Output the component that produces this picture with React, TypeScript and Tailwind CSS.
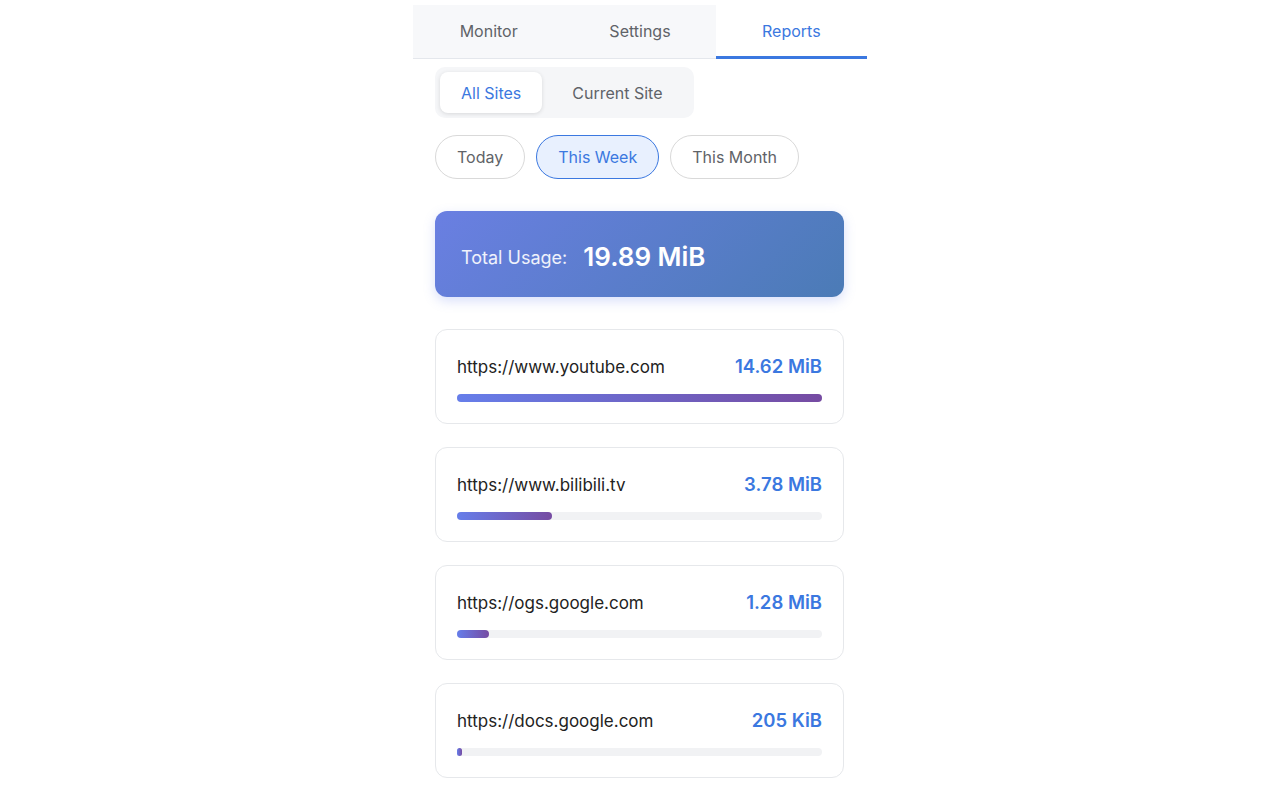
import { useState } from 'react'

const sites = [
  { url: 'https://www.youtube.com', size: '14.62 MiB', pct: 100 },
  { url: 'https://www.bilibili.tv', size: '3.78 MiB', pct: 25.9 },
  { url: 'https://ogs.google.com', size: '1.28 MiB', pct: 8.8 },
  { url: 'https://docs.google.com', size: '205 KiB', pct: 1.4 },
]

const tabs = ['Monitor', 'Settings', 'Reports']
const ranges = ['Today', 'This Week', 'This Month']

export default function App() {
  const [tab, setTab] = useState('Reports')
  const [scope, setScope] = useState('all')
  const [range, setRange] = useState('This Week')

  return (
    <div className="min-h-screen bg-white font-['Inter','Noto_Sans',sans-serif] text-[16px]">
      <div className="mx-auto w-[454px] pt-[5px]">
        <div className="flex border-b border-[#e4e7ec] bg-[#f7f8fa]">
          {tabs.map((t) => (
            <button
              key={t}
              onClick={() => setTab(t)}
              className={`-mb-px h-[54px] flex-1 border-b-[3px] text-[16px] ${
                tab === t
                  ? 'border-[#3b78e0] bg-white text-[#3b78e0]'
                  : 'border-transparent text-[#5f6368]'
              }`}
            >
              {t}
            </button>
          ))}
        </div>

        <div className="pl-[22px] pr-[23px]">
          <div className="mt-[8px] inline-flex rounded-[10px] bg-[#f5f6f8] p-[5px]">
            <button
              onClick={() => setScope('all')}
              className={`h-[41px] rounded-[8px] px-[21px] text-[16px] ${
                scope === 'all' ? 'bg-white text-[#3b78e0] shadow-[0_1px_4px_rgba(0,0,0,0.12)]' : 'text-[#5f6368]'
              }`}
            >
              All Sites
            </button>
            <button
              onClick={() => setScope('current')}
              className={`ml-[4px] h-[41px] rounded-[8px] px-[26px] text-[16px] ${
                scope === 'current' ? 'bg-white text-[#3b78e0] shadow-[0_1px_4px_rgba(0,0,0,0.12)]' : 'text-[#5f6368]'
              }`}
            >
              Current Site
            </button>
          </div>

          <div className="mt-[17px] flex gap-[11px]">
            {ranges.map((r) => (
              <button
                key={r}
                onClick={() => setRange(r)}
                className={`h-[44px] rounded-full border px-[21px] text-[16px] ${
                  range === r
                    ? 'border-[#3b78e0] bg-[#e8f0fe] text-[#3b78e0]'
                    : 'border-[#d9d9d9] bg-white text-[#5f6368]'
                }`}
              >
                {r}
              </button>
            ))}
          </div>

          <div className="mt-[32px] flex h-[86px] items-center gap-[16px] rounded-[12px] bg-[linear-gradient(135deg,#6a7fe2_0%,#4b7bb6_100%)] px-[26px] pt-[4px] shadow-[0_4px_12px_rgba(102,126,234,0.25)]">
            <span className="pt-[3px] text-[18px] text-white/90">Total Usage:</span>
            <span className="text-[26px] font-semibold text-white">19.89 MiB</span>
          </div>

          <div className="mt-[32px] flex flex-col gap-[23px]">
            {sites.map((s) => (
              <div key={s.url} className="rounded-[12px] border border-[#e6e8eb] bg-white px-[21px] pb-[21px] pt-[21px]">
                <div className="flex h-[32px] items-baseline justify-between pt-[2px]">
                  <span className="text-[17px] text-[#222]">{s.url}</span>
                  <span className="text-[18.5px] font-semibold text-[#3b78e0]">{s.size}</span>
                </div>
                <div className="mt-[11px] h-[8px] rounded-full bg-[#f1f2f4]">
                  <div
                    className="h-full rounded-full bg-[linear-gradient(90deg,#667eea,#764ba2)]"
                    style={{ width: `${s.pct}%` }}
                  />
                </div>
              </div>
            ))}
          </div>
        </div>
      </div>
    </div>
  )
}
